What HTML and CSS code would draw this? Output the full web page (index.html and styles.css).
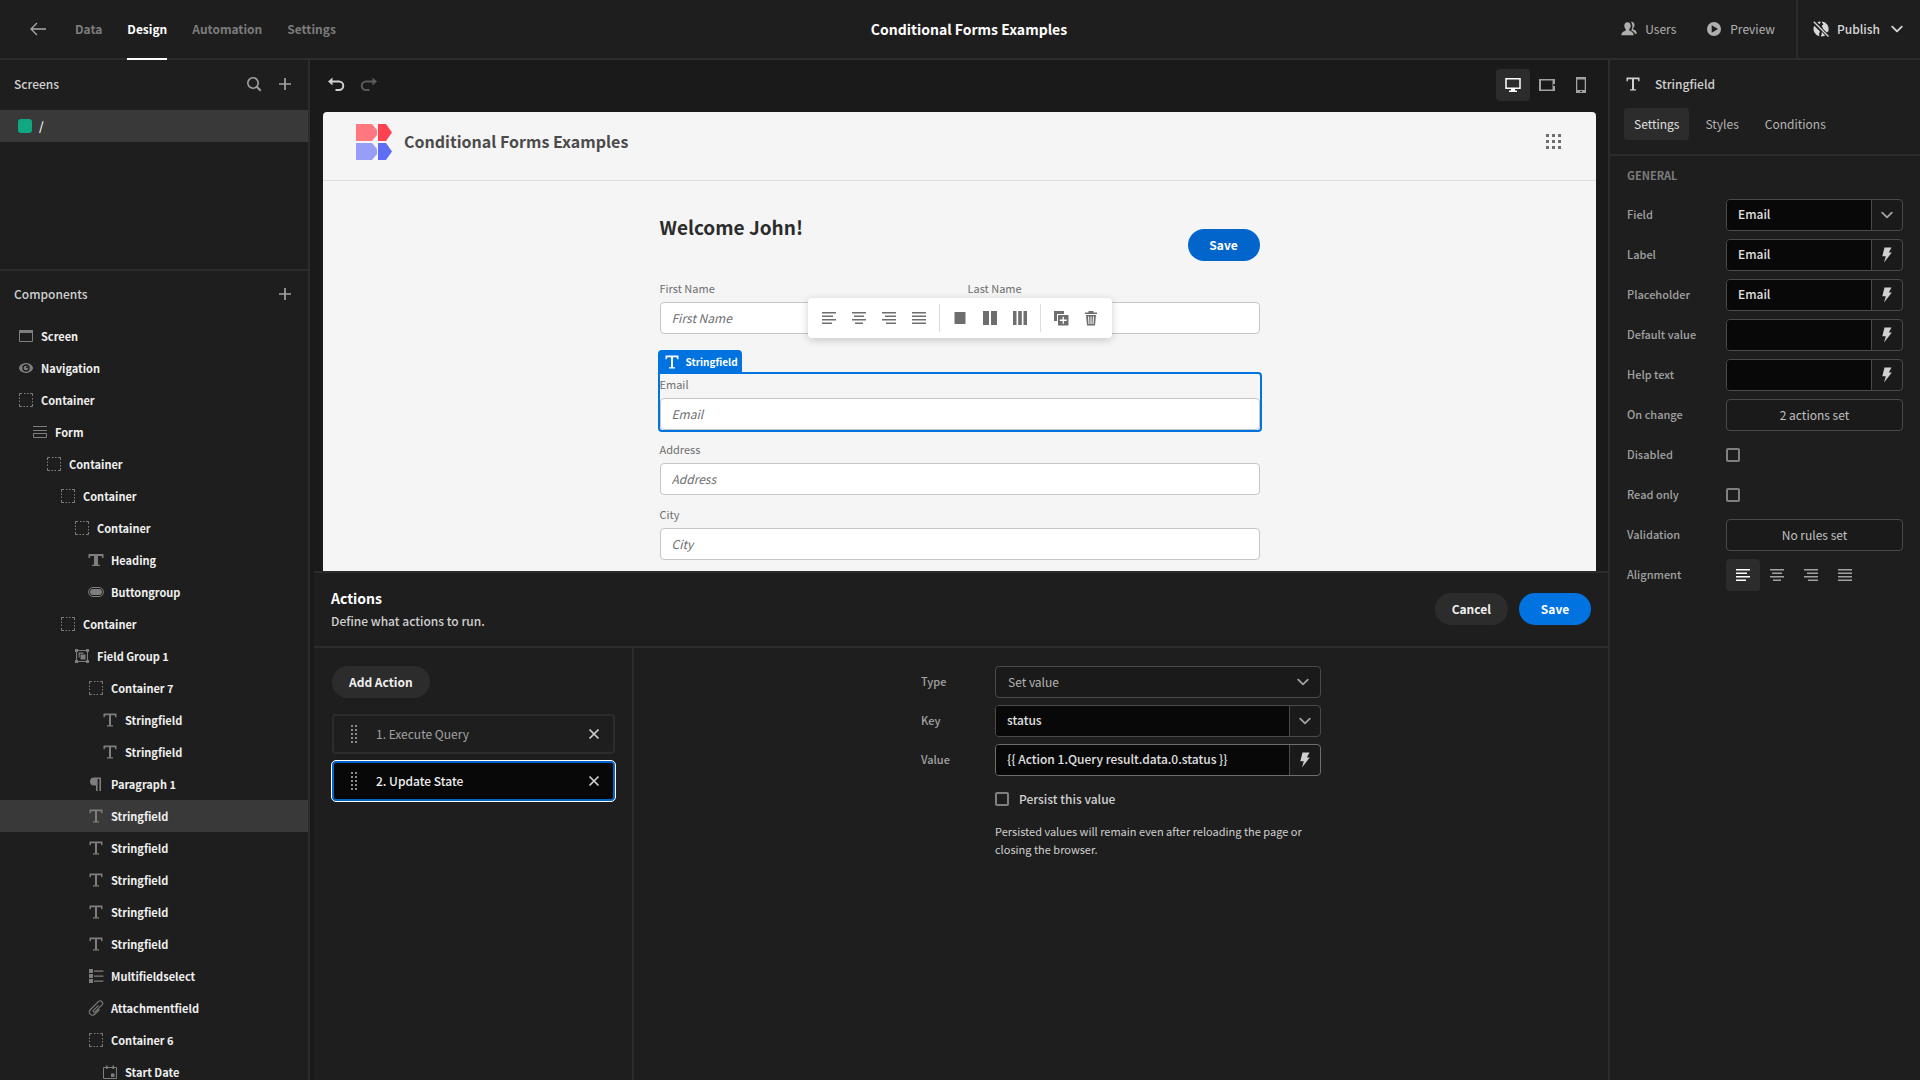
FILE: index.html
```html
<!DOCTYPE html>
<html lang="en">
<head>
<meta charset="utf-8">
<title>Conditional Forms Examples</title>
<link rel="stylesheet" href="styles.css">
</head>
<body>
<svg class="sprite" aria-hidden="true">
  <symbol id="back" viewBox="0 0 16 16"><path d="M7 2 1 8l6 6M1 8h15" fill="none" stroke="currentColor" stroke-width="1.3"/></symbol>
  <symbol id="search" viewBox="0 0 16 16"><circle cx="7" cy="7" r="5.2" fill="none" stroke="currentColor" stroke-width="1.6"/><path d="m10.8 10.8 3.9 3.9" stroke="currentColor" stroke-width="2"/></symbol>
  <symbol id="plus" viewBox="0 0 16 16"><path d="M8 2v12M2 8h12" stroke="currentColor" stroke-width="1.7"/></symbol>
  <symbol id="undo" viewBox="0 0 18 18"><path d="M1 5.500 5.500 1.500v3H12a5 5 0 0 1 0 10.500H8.500v-2H12a3.200 3.200 0 0 0 0-6.500H5.500v3z" fill="currentColor"/></symbol>
  <symbol id="screen" viewBox="0 0 16 16"><path d="M1.500 2.500h13v11h-13z" fill="none" stroke="currentColor"/><path d="M1 2h14v3H1z" fill="currentColor"/></symbol>
  <symbol id="eye" viewBox="0 0 16 16"><path fill-rule="evenodd" fill="currentColor" d="M8 3C4.500 3 1 5.600 1 8s3.500 5 7 5 7-2.600 7-5-3.500-5-7-5zm0 1.300a3.700 3.700 0 1 1 0 7.400 3.700 3.700 0 0 1 0-7.400z"/><circle cx="8" cy="8" r="2.300" fill="currentColor"/><circle cx="9" cy="7.200" r="1" fill="#1e1e1e"/></symbol>
  <symbol id="box" viewBox="0 0 16 16"><path d="M1.500 4V1.500H4M6 1.500h1.500M9 1.500h1.500M12 1.500h2.500V4M14.500 6v1.500M14.500 9v1.500M14.500 12v2.500H12M10 14.500H8.500M7 14.500H5.500M4 14.500H1.500V12M1.500 10V8.500M1.500 7V5.500" fill="none" stroke="currentColor"/></symbol>
  <symbol id="form" viewBox="0 0 16 16"><path d="M1 2.500h14M1 6.500h14" stroke="currentColor"/><path d="M1.500 9.500h13v4h-13z" fill="none" stroke="currentColor"/></symbol>
  <symbol id="heading" viewBox="0 0 16 16"><path fill="currentColor" d="M.5 2h15v4h-1.300l-.7-2H10v8.500l2 .5v1H4v-1l2-.5V4H2.500l-.7 2H.5z"/></symbol>
  <symbol id="text" viewBox="0 0 16 16"><path fill="currentColor" d="M1.500 1.500h13v3.700h-1.200l-.5-2H9v10h2v1.300H5v-1.300h2v-10H3.200l-.5 2H1.500z"/></symbol>
  <symbol id="pill" viewBox="0 0 16 16"><rect x=".5" y="3.500" width="15" height="9" rx="4.500" fill="none" stroke="currentColor"/><rect x="2" y="5" width="12" height="6" rx="3" fill="currentColor"/></symbol>
  <symbol id="group" viewBox="0 0 16 16"><path d="M2.500 2.500h11v11h-11z" fill="none" stroke="currentColor"/><path fill="currentColor" d="M1 1h3v3H1zM12 1h3v3h-3zM1 12h3v3H1zM12 12h3v3h-3zM4.500 4.500h5v1.200h-3.800v3.800H4.500zM6.500 6.500h5v5h-5z"/></symbol>
  <symbol id="para" viewBox="0 0 16 16"><path fill="currentColor" d="M6 1.500h7V15h-1.600V2.900H9.600V15H8V9.500H6a4 4 0 0 1 0-8z"/></symbol>
  <symbol id="multi" viewBox="0 0 16 16"><path fill="currentColor" d="M1 1h4v4H1zM1 6h4v4H1zM1 11h4v4H1zM6 2.500h9.500v1.200H6zM6 7.500h9.500v1.200H6zM6 12.500h9.500v1.200H6z"/></symbol>
  <symbol id="clip" viewBox="0 0 16 16"><path fill="none" stroke="currentColor" stroke-width="1.100" d="m10.500 5.300-5 5c-1 1.200.5 2.600 1.600 1.600l6.700-6.700c2.400-2.600-.9-6-3.500-3.500L2.500 9.500c-3.200 3.400 1.200 7.600 4.500 4.500l4.500-4.500"/></symbol>
  <symbol id="date" viewBox="0 0 16 16"><path d="M1.500 3.500h13v11h-13z" fill="none" stroke="currentColor"/><path fill="currentColor" d="M4 1.500h1.500V5H4zM10.500 1.500H12V5h-1.500zM9 9.500h3.500V13H9z"/></symbol>
  <symbol id="users" viewBox="0 0 16 16"><path fill="currentColor" d="M6.500 1.200c2 0 3.200 1.500 3.200 3.600 0 1.500-.7 2.700-1.400 3.500-.3.900 0 1.300.7 1.600 2.200.7 3.500 1.700 3.800 4.400H.2c.2-2.700 1.600-3.700 3.800-4.400.7-.3 1-.7.700-1.600-.7-.8-1.400-2-1.400-3.500 0-2.100 1.200-3.600 3.200-3.600zM10 .9c2-.3 3.500 1 3.500 3.200 0 1.500-.8 2.500-1.300 3.200-.3.800 0 1.100.7 1.500 1.700.8 2.800 1.500 3 4h-2c-.6-1.900-1.800-2.800-3.800-3.600.8-.9 1.300-2.300 1.300-3.900 0-1.800-.5-3.200-1.400-4.400z"/></symbol>
  <symbol id="play" viewBox="0 0 16 16"><path fill="currentColor" fill-rule="evenodd" d="M8 1a7 7 0 1 0 0 14A7 7 0 0 0 8 1zM5.700 4.200 12 8l-6.300 3.800z"/></symbol>
  <symbol id="globe" viewBox="0 0 16 16"><path fill="currentColor" d="M4.500 1.400A8 8 0 0 1 7 .5c.8 0 .8 1 .2 1.600l-.7 1.200zM9 .4a7.700 7.700 0 0 1 6.300 9.800l-1.500 1.500L9.500 7.500c.6-.8.300-1.400-.5-1.800-.6-1 0-1.700 1-1.800.8-.6-.6-1.500-1-2.300zM1.200 4.800l3 3c.8 1.200 2 1.200 2.500 2.500.4 1.200-.9 2-.6 3.300l.3 1.700A7.600 7.600 0 0 1 1.200 4.800zM9 10.500l3.500 3.700A7.700 7.700 0 0 1 8 15.600c-.3-1.500 1.200-2 .6-3.200z"/><path d="m.8.800 14.700 14.700" stroke="#1e1e1e" stroke-width="3"/><path d="m.8.800 14.700 14.700" stroke="currentColor" stroke-width="1.300"/></symbol>
  <symbol id="chevron" viewBox="0 0 10 10"><path d="m1 3 4 4 4-4" fill="none" stroke="currentColor" stroke-width="1.500" stroke-linecap="round" stroke-linejoin="round"/></symbol>
  <symbol id="bolt" viewBox="0 0 16 16"><path fill="currentColor" d="M5.500.5h7L9.800 5.400h3L5 15.500l1.800-6.300H3.300z"/></symbol>
  <symbol id="desktop" viewBox="0 0 18 18"><path d="M2 2.700h14v9.600H2z" fill="none" stroke="currentColor" stroke-width="1.500"/><path fill="currentColor" d="M7 12h4v2.500h2V16H5v-1.500h2z"/></symbol>
  <symbol id="tablet" viewBox="0 0 18 18"><path fill="currentColor" fill-rule="evenodd" d="M1 3h16v12H1zm2 1.500v9h11.500v-9zM15.300 8v2H17V8z"/></symbol>
  <symbol id="mobile" viewBox="0 0 18 18"><path fill="currentColor" fill-rule="evenodd" d="M4 1h10v16H4zm1.300 2.500v10.500h7.400V3.500zM8 15v1h2v-1z"/></symbol>
  <symbol id="left" viewBox="0 0 16 16"><path fill="currentColor" d="M1 2h14v1.500H1zM1 5.500h11V7H1zM1 9h14v1.500H1zM1 12.500h10V14H1z"/></symbol>
  <symbol id="center" viewBox="0 0 16 16"><path fill="currentColor" d="M1 2h14v1.500H1zM3 5.500h10V7H3zM1 9h14v1.500H1zM4 12.500h8V14H4z"/></symbol>
  <symbol id="right" viewBox="0 0 16 16"><path fill="currentColor" d="M1 2h14v1.500H1zM4 5.500h11V7H4zM1 9h14v1.500H1zM5 12.500h10V14H5z"/></symbol>
  <symbol id="justify" viewBox="0 0 16 16"><path fill="currentColor" d="M1 2h14v1.500H1zM1 5.500h14V7H1zM1 9h14v1.500H1zM1 12.500h14V14H1z"/></symbol>
  <symbol id="col1" viewBox="0 0 16 16"><path fill="currentColor" d="M2.500 2h11v12h-11z"/></symbol>
  <symbol id="col2" viewBox="0 0 16 16"><path fill="currentColor" d="M1 1h6v14H1zM9 1h6v14H9z"/></symbol>
  <symbol id="col3" viewBox="0 0 16 16"><path fill="currentColor" d="M1 1h3.500v14H1zM6.200 1h3.600v14H6.200zM11.500 1H15v14h-3.500z"/></symbol>
  <symbol id="copy" viewBox="0 0 16 16"><path fill="currentColor" fill-rule="evenodd" d="M1 1h10v3H4v7H1zM5 5h10.500v10.500H5zm4.600 1.800v2.800H6.800v1.300h2.800v2.800h1.300v-2.800h2.800V9.600h-2.800V6.800z"/></symbol>
  <symbol id="trash" viewBox="0 0 16 16"><path fill="currentColor" fill-rule="evenodd" d="M5.500 1h5v1.500H14V4H2V2.500h3.500zM3 5h10l-1 10.500H4zm2 1.500.5 7.500h1L6 6.500zm2.500 0V14h1V6.500zm2.500 0L9.500 14h1l.5-7.500z"/></symbol>
  <symbol id="grid" viewBox="0 0 16 16"><path fill="currentColor" d="M0 0h3v3H0zM6 0h3v3H6zM12 0h3v3h-3zM0 6h3v3H0zM6 6h3v3H6zM12 6h3v3h-3zM0 12h3v3H0zM6 12h3v3H6zM12 12h3v3h-3z"/></symbol>
  <symbol id="drag" viewBox="0 0 8 18"><path stroke="currentColor" stroke-width="2" stroke-dasharray="2 2" d="M2 0v18M6 0v18"/></symbol>
  <symbol id="close" viewBox="0 0 12 12"><path d="m1.500 1.500 9 9m0-9-9 9" stroke="currentColor" stroke-width="1.700"/></symbol>
  <symbol id="logo" viewBox="0 0 36 36"><path fill="#ff7880" d="M0 0h16l5 6v5l-5 6H0z"/><path fill="#ff4252" d="M22 0h8l6 8.500-6 8.500h-8z"/><path fill="#989ef8" d="M0 19h16l5 6v5l-5 6H0z"/><path fill="#5f6df5" d="M22 19h8l6 8.500-6 8.500h-8z"/></symbol>
</svg>

<div class="app">
  <header class="topbar">
    <nav class="topnav">
      <a href="#" class="back" aria-label="Back"><svg class="i16"><use href="#back"/></svg></a>
      <a href="#">Data</a><a href="#" class="active">Design</a><a href="#">Automation</a><a href="#">Settings</a>
    </nav>
    <h1 class="app-title">Conditional Forms Examples</h1>
    <div class="top-actions">
      <button class="top-btn"><svg class="i16"><use href="#users"/></svg>Users</button>
      <button class="top-btn"><svg class="i16"><use href="#play"/></svg>Preview</button>
      <button class="top-btn publish"><svg class="i16"><use href="#globe"/></svg>Publish<svg class="chev"><use href="#chevron"/></svg></button>
    </div>
  </header>

  <aside class="left">
    <section class="screens">
      <div class="panel-head"><h2>Screens</h2>
        <button aria-label="Search"><svg class="i16"><use href="#search"/></svg></button>
        <button aria-label="Add screen"><svg class="i16"><use href="#plus"/></svg></button>
      </div>
      <a href="#" class="screen-row"><span class="swatch"></span>/</a>
    </section>
    <section class="components">
      <div class="panel-head"><h2>Components</h2>
        <button aria-label="Add component"><svg class="i16"><use href="#plus"/></svg></button>
      </div>
      <ul class="tree">
        <li class="l0"><svg class="i16"><use href="#screen"/></svg>Screen</li>
        <li class="l0"><svg class="i16"><use href="#eye"/></svg>Navigation</li>
        <li class="l0"><svg class="i16"><use href="#box"/></svg>Container</li>
        <li class="l1"><svg class="i16"><use href="#form"/></svg>Form</li>
        <li class="l2"><svg class="i16"><use href="#box"/></svg>Container</li>
        <li class="l3"><svg class="i16"><use href="#box"/></svg>Container</li>
        <li class="l4"><svg class="i16"><use href="#box"/></svg>Container</li>
        <li class="l5"><svg class="i16"><use href="#heading"/></svg>Heading</li>
        <li class="l5"><svg class="i16"><use href="#pill"/></svg>Buttongroup</li>
        <li class="l3"><svg class="i16"><use href="#box"/></svg>Container</li>
        <li class="l4"><svg class="i16"><use href="#group"/></svg>Field Group 1</li>
        <li class="l5"><svg class="i16"><use href="#box"/></svg>Container 7</li>
        <li class="l6"><svg class="i16"><use href="#text"/></svg>Stringfield</li>
        <li class="l6"><svg class="i16"><use href="#text"/></svg>Stringfield</li>
        <li class="l5"><svg class="i16"><use href="#para"/></svg>Paragraph 1</li>
        <li class="l5 selected"><svg class="i16"><use href="#text"/></svg>Stringfield</li>
        <li class="l5"><svg class="i16"><use href="#text"/></svg>Stringfield</li>
        <li class="l5"><svg class="i16"><use href="#text"/></svg>Stringfield</li>
        <li class="l5"><svg class="i16"><use href="#text"/></svg>Stringfield</li>
        <li class="l5"><svg class="i16"><use href="#text"/></svg>Stringfield</li>
        <li class="l5"><svg class="i16"><use href="#multi"/></svg>Multifieldselect</li>
        <li class="l5"><svg class="i16"><use href="#clip"/></svg>Attachmentfield</li>
        <li class="l5"><svg class="i16"><use href="#box"/></svg>Container 6</li>
        <li class="l6"><svg class="i16"><use href="#date"/></svg>Start Date</li>
      </ul>
    </section>
  </aside>

  <main class="center">
    <div class="toolbar">
      <button aria-label="Undo"><svg class="i18"><use href="#undo"/></svg></button>
      <button class="redo" aria-label="Redo" disabled><svg class="i18"><use href="#undo"/></svg></button>
      <div class="devices">
        <button class="seg on" aria-label="Desktop"><svg class="i18"><use href="#desktop"/></svg></button>
        <button class="seg" aria-label="Tablet"><svg class="i18"><use href="#tablet"/></svg></button>
        <button class="seg" aria-label="Mobile"><svg class="i18"><use href="#mobile"/></svg></button>
      </div>
    </div>

    <div class="canvas">
      <div class="site-nav">
        <svg class="logo"><use href="#logo"/></svg>
        <h2>Conditional Forms Examples</h2>
        <button aria-label="Apps"><svg class="i16"><use href="#grid"/></svg></button>
      </div>
      <form class="site-form">
        <div class="welcome"><h3>Welcome John!</h3><button type="button" class="pill-btn cta">Save</button></div>
        <div class="two">
          <div class="field"><label for="fn">First Name</label><input id="fn" placeholder="First Name"></div>
          <div class="field"><label for="ln">Last Name</label><input id="ln" placeholder="Last Name"></div>
        </div>
        <div class="field picked">
          <span class="chip"><svg class="i16"><use href="#text"/></svg>Stringfield</span>
          <div class="float">
            <button type="button" aria-label="Align left"><svg class="i16"><use href="#left"/></svg></button>
            <button type="button" aria-label="Align center"><svg class="i16"><use href="#center"/></svg></button>
            <button type="button" aria-label="Align right"><svg class="i16"><use href="#right"/></svg></button>
            <button type="button" aria-label="Justify"><svg class="i16"><use href="#justify"/></svg></button>
            <span class="bar"></span>
            <button type="button" aria-label="One column"><svg class="i16"><use href="#col1"/></svg></button>
            <button type="button" aria-label="Two columns"><svg class="i16"><use href="#col2"/></svg></button>
            <button type="button" aria-label="Three columns"><svg class="i16"><use href="#col3"/></svg></button>
            <span class="bar"></span>
            <button type="button" aria-label="Duplicate"><svg class="i16"><use href="#copy"/></svg></button>
            <button type="button" aria-label="Delete"><svg class="i16"><use href="#trash"/></svg></button>
          </div>
          <label for="em">Email</label><input id="em" placeholder="Email">
        </div>
        <div class="field"><label for="ad">Address</label><input id="ad" placeholder="Address"></div>
        <div class="field"><label for="ci">City</label><input id="ci" placeholder="City"></div>
      </form>
    </div>

    <section class="drawer">
      <div class="drawer-head">
        <div class="drawer-title"><h2>Actions</h2><p>Define what actions to run.</p></div>
        <button class="pill-btn">Cancel</button>
        <button class="pill-btn primary">Save</button>
      </div>
      <div class="drawer-body">
        <div class="actions">
          <button class="pill-btn">Add Action</button>
          <div class="action"><svg class="drag"><use href="#drag"/></svg><span>1. Execute Query</span><button aria-label="Remove"><svg class="x"><use href="#close"/></svg></button></div>
          <div class="action current"><svg class="drag"><use href="#drag"/></svg><span>2. Update State</span><button aria-label="Remove"><svg class="x"><use href="#close"/></svg></button></div>
        </div>
        <div class="action-pane">
          <div class="action-form">
            <label for="ty">Type</label>
            <div class="select"><select id="ty"><option>Set value</option></select><svg class="chev"><use href="#chevron"/></svg></div>
            <label for="ke">Key</label>
            <div class="combo"><input id="ke" value="status"><button aria-label="Open"><svg class="chev"><use href="#chevron"/></svg></button></div>
            <label for="va">Value</label>
            <div class="combo strong"><input id="va" value="{{ Action 1.Query result.data.0.status }}"><button aria-label="Bind"><svg class="i16"><use href="#bolt"/></svg></button></div>
            <label class="check second"><input type="checkbox">Persist this value</label>
            <p class="second note">Persisted values will remain even after reloading the page or closing the browser.</p>
          </div>
        </div>
      </div>
    </section>
  </main>

  <aside class="rightp">
    <div class="right-head">
      <h2><svg class="i16"><use href="#text"/></svg>Stringfield</h2>
      <nav class="tabs"><button class="on">Settings</button><button>Styles</button><button>Conditions</button></nav>
    </div>
    <div class="props">
      <h3>GENERAL</h3>
      <div class="prop"><label for="p1">Field</label><div class="combo"><input id="p1" value="Email"><button aria-label="Open"><svg class="chev"><use href="#chevron"/></svg></button></div></div>
      <div class="prop"><label for="p2">Label</label><div class="combo"><input id="p2" value="Email"><button aria-label="Bind"><svg class="i16"><use href="#bolt"/></svg></button></div></div>
      <div class="prop"><label for="p3">Placeholder</label><div class="combo"><input id="p3" value="Email"><button aria-label="Bind"><svg class="i16"><use href="#bolt"/></svg></button></div></div>
      <div class="prop"><label for="p4">Default value</label><div class="combo"><input id="p4"><button aria-label="Bind"><svg class="i16"><use href="#bolt"/></svg></button></div></div>
      <div class="prop"><label for="p5">Help text</label><div class="combo"><input id="p5"><button aria-label="Bind"><svg class="i16"><use href="#bolt"/></svg></button></div></div>
      <div class="prop"><label for="p6">On change</label><button id="p6" class="outline">2 actions set</button></div>
      <div class="prop"><label for="p7">Disabled</label><input id="p7" type="checkbox"></div>
      <div class="prop"><label for="p8">Read only</label><input id="p8" type="checkbox"></div>
      <div class="prop"><label for="p9">Validation</label><button id="p9" class="outline">No rules set</button></div>
      <div class="prop"><span>Alignment</span><div class="aligns">
        <button class="seg on" aria-label="Left"><svg class="i16"><use href="#left"/></svg></button>
        <button class="seg" aria-label="Center"><svg class="i16"><use href="#center"/></svg></button>
        <button class="seg" aria-label="Right"><svg class="i16"><use href="#right"/></svg></button>
        <button class="seg" aria-label="Justify"><svg class="i16"><use href="#justify"/></svg></button>
      </div></div>
    </div>
  </aside>
</div>
</body>
</html>
```
FILE: styles.css
```css
:root {
  --bg: #1e1e1e;
  --deep: #1a1a1a;
  --line: #2c2c2c;
  --raised: #2c2c2c;
  --edge: #4a4a4a;
  --text: #d0d0d0;
  --dim: #a2a2a2;
  --blue: #0073e0;
}
* { box-sizing: border-box; margin: 0; padding: 0; }
body {
  background: var(--bg);
  color: var(--text);
  font: 500 12px/20px "Noto Sans CJK JP", "Noto Sans", sans-serif;
}
button, input, select { font: inherit; color: inherit; background: none; border: 0; }
a { color: inherit; text-decoration: none; }
button { display: flex; align-items: center; justify-content: center; cursor: pointer; }
svg { flex: none; display: block; }
.sprite { position: absolute; width: 0; height: 0; }
.i16 { width: 16px; height: 16px; }
.i18 { width: 18px; height: 18px; }
.chev { width: 12px; height: 12px; }

.app {
  display: grid;
  grid-template: 60px minmax(0, 1fr) / 310px minmax(0, 1fr) 312px;
  height: 100vh;
  overflow: hidden;
}

/* top bar */
.topbar {
  grid-column: 1 / -1;
  display: grid;
  grid-template-columns: 1fr auto 1fr;
  border-bottom: 2px solid var(--line);
}
.topnav { display: flex; gap: 25px; padding-left: 30px; }
.topnav a { display: flex; align-items: center; height: 60px; padding-bottom: 2px; color: #7c7c7c; font-weight: 700; }
.topnav .back { color: #a8a8a8; margin-right: 4px; }
.topnav .active { color: #fff; border-bottom: 2px solid #fff; padding-bottom: 0; }
.app-title { align-self: center; margin-left: 18px; padding-bottom: 2px; font-size: 14px; font-weight: 700; color: #fff; }
.top-actions { display: flex; justify-content: flex-end; }
.top-btn { gap: 8px; margin-right: 30px; padding-bottom: 2px; font-weight: 400; color: #b0b0b0; }
.top-btn + .top-btn { margin-right: 21px; }
.top-btn.publish { margin: 0; padding: 0 17px 2px 15px; border-left: 2px solid var(--line); font-weight: 500; color: #d8d8d8; }
.publish .chev { margin-left: 3px; }

/* left panel */
.left { display: flex; flex-direction: column; border-right: 2px solid var(--line); min-height: 0; }
.screens { height: 211px; border-bottom: 2px solid var(--line); }
.components { flex: 1; min-height: 0; overflow: hidden; }
.panel-head { display: flex; align-items: center; gap: 15px; height: 49px; padding: 0 15px 3px 14px; color: var(--dim); }
.screens .panel-head { height: 50px; }
.panel-head h2 { flex: 1; font-size: 12px; font-weight: 500; color: var(--text); }
.screen-row { display: flex; align-items: center; gap: 7px; height: 32px; padding-left: 18px; background: #393939; color: #fff; }
.swatch { width: 14px; height: 14px; border-radius: 3px; background: #10a883; }
.tree { list-style: none; }
.tree li { display: flex; align-items: center; gap: 7px; height: 32px; color: #f0f0f0; font-size: 11px; font-weight: 700; }
.tree svg { color: #7e7e7e; }
.tree .selected { background: #393939; }
.l0 { padding-left: 18px; }
.l1 { padding-left: 32px; }
.l2 { padding-left: 46px; }
.l3 { padding-left: 60px; }
.l4 { padding-left: 74px; }
.l5 { padding-left: 88px; }
.l6 { padding-left: 102px; }

/* center */
.center { display: flex; flex-direction: column; min-height: 0; background: var(--deep); }
.toolbar { display: flex; align-items: center; gap: 15px; height: 52px; padding: 0 10px 2px 17px; }
.redo { transform: scaleX(-1); color: #5a5a5a; }
.devices { display: flex; margin-left: auto; color: var(--dim); }
.seg { width: 34px; height: 32px; border-radius: 4px; color: var(--dim); }
.seg.on { background: var(--raised); color: #fff; }

.canvas {
  flex: 1;
  min-height: 0;
  overflow: hidden;
  margin: 0 12px 0 13px;
  border-radius: 4px 4px 0 0;
  background: #f5f5f5;
  color: #6e6e6e;
}
.site-nav { display: flex; align-items: center; gap: 12px; height: 69px; padding: 0 34px 8px 33px; border-bottom: 1px solid #dedede; }
.logo { width: 36px; height: 36px; }
.site-nav h2 { flex: 1; padding-bottom: 2px; font-size: 16px; font-weight: 700; color: #4b4b4b; }
.site-form { display: flex; flex-direction: column; gap: 9px; width: 600px; margin: 31px auto 0; }
.welcome { display: flex; justify-content: space-between; align-items: flex-end; height: 49px; margin-bottom: 8px; }
.welcome h3 { align-self: flex-start; font-size: 19px; line-height: 30px; font-weight: 700; color: #2c2c2c; }
.pill-btn { height: 32px; padding: 0 17px; border-radius: 16px; background: var(--raised); color: #f0f0f0; font-weight: 700; }
.pill-btn.cta { width: 72px; background: #0265cc; color: #fff; }
.pill-btn.primary { width: 72px; background: var(--blue); color: #fff; }
.two { display: grid; grid-template-columns: 1fr 1fr; gap: 16px; }
.field { position: relative; }
.field label { display: block; height: 24px; line-height: 20px; font-size: 11px; font-weight: 400; }
.field input { display: block; width: 100%; height: 32px; padding: 0 11px 2px; border: 1px solid #c6c6c6; border-radius: 4px; background: #fff; }
.field input::placeholder { color: #6e6e6e; font-style: italic; font-weight: 400; opacity: 1; }
.picked { margin-top: 31px; }
.picked::after { content: ""; position: absolute; inset: -2px; border: 2px solid var(--blue); border-radius: 0 4px 4px 4px; }
.chip {
  position: absolute; left: -2px; bottom: 100%;
  display: flex; align-items: center; gap: 6px;
  height: 24px; padding: 0 4px 0 6px;
  border-radius: 4px 4px 0 0;
  background: var(--blue); color: #fff; font-size: 10px; font-weight: 700;
}
.float {
  position: absolute; z-index: 1; left: 50%; bottom: calc(100% + 36px); transform: translateX(-50%);
  display: flex; align-items: center; gap: 14px;
  height: 40px; padding: 0 13px;
  border-radius: 4px; background: #fff; box-shadow: 0 2px 8px rgba(0, 0, 0, .2);
}
.bar { width: 1px; height: 28px; background: #dcdcdc; margin: 0 -2px; }

/* drawer */
.drawer { flex: 0 0 calc(50% - 1px); display: flex; flex-direction: column; margin-left: 4px; border-top: 2px solid var(--line); background: var(--bg); }
.drawer-head { display: flex; align-items: center; gap: 11px; height: 75px; padding: 0 17px 2px 17px; border-bottom: 2px solid var(--line); }
.drawer-title { flex: 1; }
.drawer-title h2 { font-size: 14px; line-height: 24px; font-weight: 700; color: #fff; }
.drawer-title p { line-height: 22px; }
.drawer-body { flex: 1; display: flex; min-height: 0; }
.actions { width: 320px; padding: 18px 17px 18px 18px; border-right: 2px solid var(--line); }
.action { display: flex; align-items: center; height: 40px; margin-top: 7px; padding: 0 13px 0 16px; border: 2px solid var(--line); border-radius: 4px; color: var(--dim); font-weight: 400; }
.pill-btn + .action { margin-top: 16px; }
.action span { flex: 1; margin-left: 18px; }
.action button { color: #d0d0d0; }
.action.current { border-color: #0265cc; outline: 1px solid #fff; background: #080808; color: #f0f0f0; font-weight: 500; }
.drag { width: 8px; height: 18px; color: #8a8a8a; }
.x { width: 12px; height: 12px; }
.action-pane { flex: 1; padding: 18px; }
.action-form { display: grid; grid-template-columns: 60px 1fr; column-gap: 14px; row-gap: 7px; align-items: center; max-width: 400px; margin: 0 auto; }
.action-form > label, .prop label, .prop span { padding-bottom: 2px; font-size: 11px; color: var(--dim); }
.second { grid-column: 2; }
.action-form .check { display: flex; align-items: center; gap: 10px; height: 32px; padding-bottom: 0; font-size: 12px; color: var(--text); }
.note { font-size: 11px; line-height: 18px; font-weight: 400; }

.combo { display: flex; height: 32px; border: 1px solid var(--edge); border-radius: 4px; overflow: hidden; background: var(--deep); }
.combo.strong { border-color: #6e6e6e; }
.combo input { flex: 1; min-width: 0; padding: 0 11px 2px; background: #080808; color: #e0e0e0; }
.combo button { width: 31px; border-left: 1px solid var(--edge); color: #d0d0d0; }
.combo .chev { color: var(--dim); }
.select { position: relative; }
.select select { appearance: none; width: 100%; height: 32px; padding: 0 12px; border: 1px solid var(--edge); border-radius: 4px; background: var(--deep); color: #b4b4b4; font-weight: 400; }
.select .chev { position: absolute; right: 12px; top: 10px; color: var(--dim); pointer-events: none; }
input[type="checkbox"] { appearance: none; width: 14px; height: 14px; border: 2px solid #808080; border-radius: 2px; }

/* right panel */
.rightp { border-left: 2px solid var(--line); }
.right-head { height: 96px; padding: 14px 14px 0; border-bottom: 2px solid var(--line); }
.right-head h2 { display: flex; align-items: center; gap: 14px; height: 20px; padding-left: 1px; font-size: 12px; font-weight: 500; }
.tabs { display: flex; gap: 6px; margin-top: 14px; }
.tabs button { height: 32px; padding: 0 10px; border-radius: 4px; font-weight: 400; color: #b4b4b4; }
.tabs .on { background: var(--raised); color: #e0e0e0; }
.props { display: flex; flex-direction: column; gap: 8px; padding: 9px 17px 0; }
.props h3 { height: 26px; font-size: 11px; line-height: 20px; font-weight: 700; color: #7c7c7c; }
.prop { display: grid; grid-template-columns: 99px 1fr; align-items: center; height: 32px; }
.outline { height: 32px; border: 1px solid var(--edge); border-radius: 4px; background: var(--deep); font-weight: 400; color: #c0c0c0; }
.aligns { display: flex; }
```
